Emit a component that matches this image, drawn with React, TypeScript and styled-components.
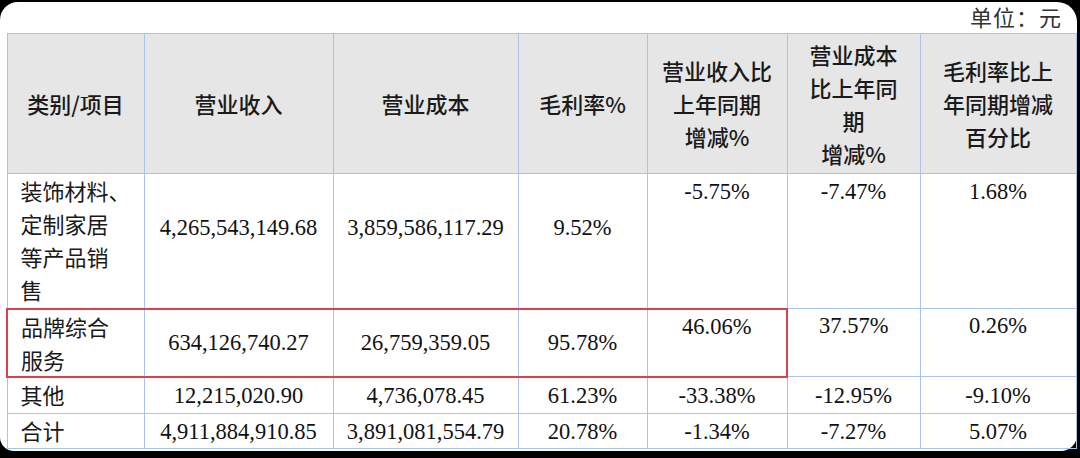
import React from 'react';
import styled, { createGlobalStyle } from 'styled-components';

type Row = {
  name: string[];
  revenue: string;
  cost: string;
  margin: string;
  revChange: string;
  costChange: string;
  marginChange: string;
  height: number;
  numTop?: number;
  changeTop?: number;
  highlight?: boolean;
};

const rows: Row[] = [
  {
    name: ['装饰材料、', '定制家居', '等产品销', '售'],
    revenue: '4,265,543,149.68',
    cost: '3,859,586,117.29',
    margin: '9.52%',
    revChange: '-5.75%',
    costChange: '-7.47%',
    marginChange: '1.68%',
    height: 135,
    numTop: 37,
    changeTop: 1,
  },
  {
    name: ['品牌综合', '服务'],
    revenue: '634,126,740.27',
    cost: '26,759,359.05',
    margin: '95.78%',
    revChange: '46.06%',
    costChange: '37.57%',
    marginChange: '0.26%',
    height: 68,
    changeTop: 0,
    highlight: true,
  },
  {
    name: ['其他'],
    revenue: '12,215,020.90',
    cost: '4,736,078.45',
    margin: '61.23%',
    revChange: '-33.38%',
    costChange: '-12.95%',
    marginChange: '-9.10%',
    height: 37,
  },
  {
    name: ['合计'],
    revenue: '4,911,884,910.85',
    cost: '3,891,081,554.79',
    margin: '20.78%',
    revChange: '-1.34%',
    costChange: '-7.27%',
    marginChange: '5.07%',
    height: 35,
  },
];

const headers: string[][] = [
  ['类别/项目'],
  ['营业收入'],
  ['营业成本'],
  ['毛利率%'],
  ['营业收入比', '上年同期', '增减%'],
  ['营业成本', '比上年同', '期', '增减%'],
  ['毛利率比上', '年同期增减', '百分比'],
];

const widths = [137, 189, 185, 129, 140, 133, 156];

export default function App() {
  return (
    <>
      <GlobalStyle />
      <Frame>
        <Unit>单位：元</Unit>
        <Table>
          <colgroup>
            {widths.map((w, i) => (
              <col key={i} style={{ width: w }} />
            ))}
          </colgroup>
          <thead>
            <tr style={{ height: 140 }}>
              {headers.map((h, i) => (
                <Th key={i}>
                  {h.map((line, j) => (
                    <div key={j}>{line}</div>
                  ))}
                </Th>
              ))}
            </tr>
          </thead>
          <tbody>
            {rows.map((r, i) => {
              const cells = [r.revenue, r.cost, r.margin];
              const changes = [r.revChange, r.costChange, r.marginChange];
              return (
                <tr key={i} style={{ height: r.height }}>
                  <NameCell $hl={r.highlight ? 'first' : undefined}>
                    {r.name.map((line, j) => (
                      <div key={j}>{line}</div>
                    ))}
                  </NameCell>
                  {cells.map((c, j) => (
                    <NumCell
                      key={j}
                      $top={r.numTop}
                      $hl={r.highlight ? 'mid' : undefined}
                    >
                      {c}
                    </NumCell>
                  ))}
                  {changes.map((c, j) => (
                    <NumCell
                      key={j}
                      $top={r.changeTop}
                      $hl={r.highlight && j === 0 ? 'last' : undefined}
                    >
                      {c}
                    </NumCell>
                  ))}
                </tr>
              );
            })}
          </tbody>
        </Table>
      </Frame>
    </>
  );
}

const GlobalStyle = createGlobalStyle`
  html, body {
    margin: 0;
    padding: 0;
    background: #000;
  }
  body {
    width: 1080px;
    height: 458px;
    overflow: hidden;
  }
`;

const Frame = styled.div`
  box-sizing: border-box;
  display: flex;
  flex-direction: column;
  margin-top: 2px;
  width: 1077px;
  height: 449px;
  padding: 0 2px 0 6px;
  background: #fff;
  border-radius: 18px 20px 16px 14px;
`;

const Unit = styled.div`
  height: 31px;
  line-height: 28px;
  padding-right: 13px;
  text-align: right;
  font-family: 'Noto Sans CJK SC', sans-serif;
  font-size: 22px;
  letter-spacing: 1px;
  color: #333;
`;

const Table = styled.table`
  width: 1069px;
  table-layout: fixed;
  border-collapse: collapse;
`;

const Th = styled.th`
  padding: 0;
  background: #e6e6e6;
  border: 1px solid #a8c4e8;
  font-family: 'Noto Sans CJK SC', sans-serif;
  font-weight: 500;
  font-size: 22px;
  line-height: 33px;
  color: #1a1a1a;
  text-align: center;
  vertical-align: middle;
`;

type HL = 'first' | 'mid' | 'last' | undefined;

const hlBorders = (hl: HL) => {
  if (!hl) return '';
  const red = '2px solid #d9434d';
  return `
    border-top: ${red};
    border-bottom: ${red};
    ${hl === 'first' ? `border-left: ${red};` : ''}
    ${hl === 'last' ? `border-right: ${red};` : ''}
  `;
};

const NameCell = styled.td<{ $hl?: HL }>`
  padding: 0 0 0 13px;
  border: 1px solid #a8c4e8;
  font-family: 'Noto Sans CJK SC', sans-serif;
  font-size: 22px;
  line-height: 33px;
  color: #1a1a1a;
  text-align: left;
  vertical-align: top;
  ${(p) => hlBorders(p.$hl)}
`;

const NumCell = styled.td<{ $top?: number; $hl?: HL }>`
  padding: ${(p) => (p.$top !== undefined ? `${p.$top}px 0 0` : '0')};
  border: 1px solid #a8c4e8;
  font-family: 'Liberation Serif', 'Times New Roman', serif;
  font-size: 22.5px;
  line-height: 33px;
  color: #111;
  text-align: center;
  vertical-align: ${(p) => (p.$top !== undefined ? 'top' : 'middle')};
  white-space: nowrap;
  ${(p) => hlBorders(p.$hl)}
`;
